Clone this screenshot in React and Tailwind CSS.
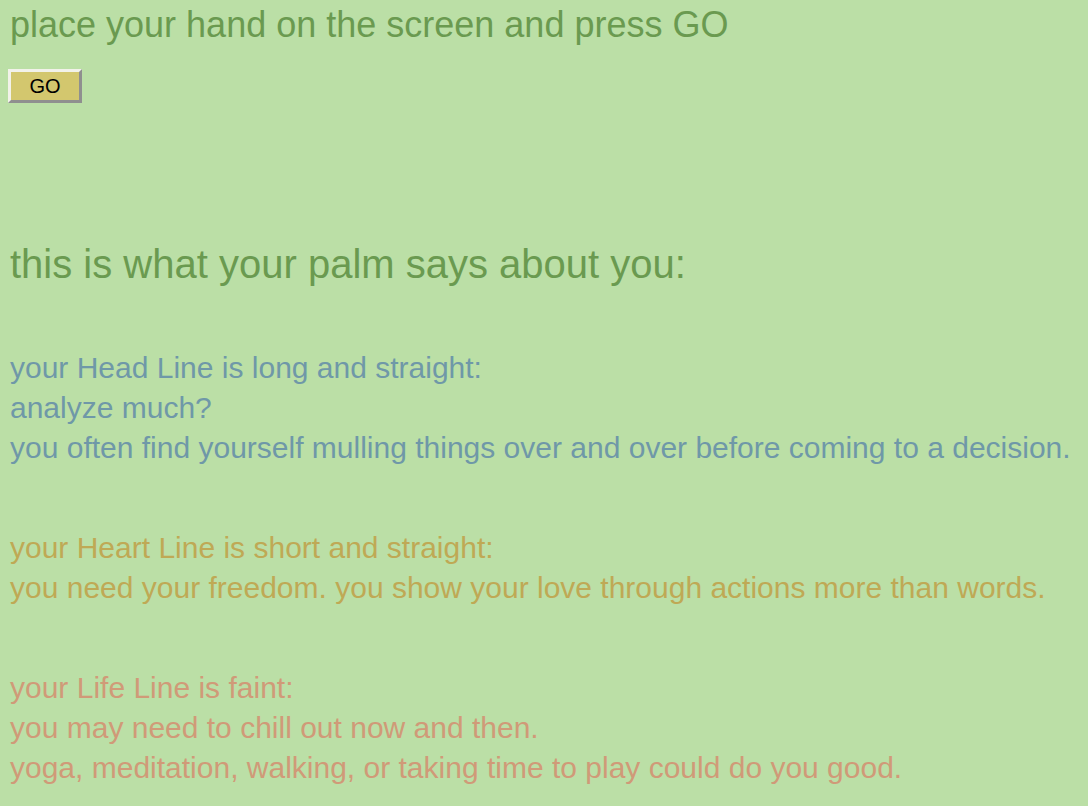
export default function App() {
  const sections = [
    {
      color: "text-[#6f98a8]",
      lines: [
        "your Head Line is long and straight:",
        "analyze much?",
        "you often find yourself mulling things over and over before coming to a decision.",
      ],
    },
    {
      color: "text-[#bfa955]",
      lines: [
        "your Heart Line is short and straight:",
        "you need your freedom. you show your love through actions more than words.",
      ],
    },
    {
      color: "text-[#d09a78]",
      lines: [
        "your Life Line is faint:",
        "you may need to chill out now and then.",
        "yoga, meditation, walking, or taking time to play could do you good.",
      ],
    },
  ];

  return (
    <main className="min-h-[806px] bg-[#bbdfa6] px-[10px] pt-[5px] font-['Liberation_Sans',Arial,sans-serif]">
      <h1 className="text-[36px] leading-[40px] text-[#6a9a50] whitespace-nowrap">
        place your hand on the screen and press GO
      </h1>

      <button className="mt-[24px] -ml-[2px] w-[74px] h-[34px] bg-[#d3c76e] border-[3px] border-t-[#f2f2ea] border-l-[#f2f2ea] border-b-[#8f8f8f] border-r-[#8f8f8f] text-[20px] leading-none text-black">
        GO
      </button>

      <h2 className="mt-[137px] text-[40px] leading-[48px] text-[#6a9a50] whitespace-nowrap">
        this is what your palm says about you:
      </h2>

      <div className="mt-[60px] flex flex-col gap-[60px]">
        {sections.map((s, i) => (
          <div key={i} className={`text-[30px] leading-[40px] ${s.color}`}>
            {s.lines.map((l, j) => (
              <p key={j} className="whitespace-nowrap">
                {l}
              </p>
            ))}
          </div>
        ))}
      </div>
    </main>
  );
}
